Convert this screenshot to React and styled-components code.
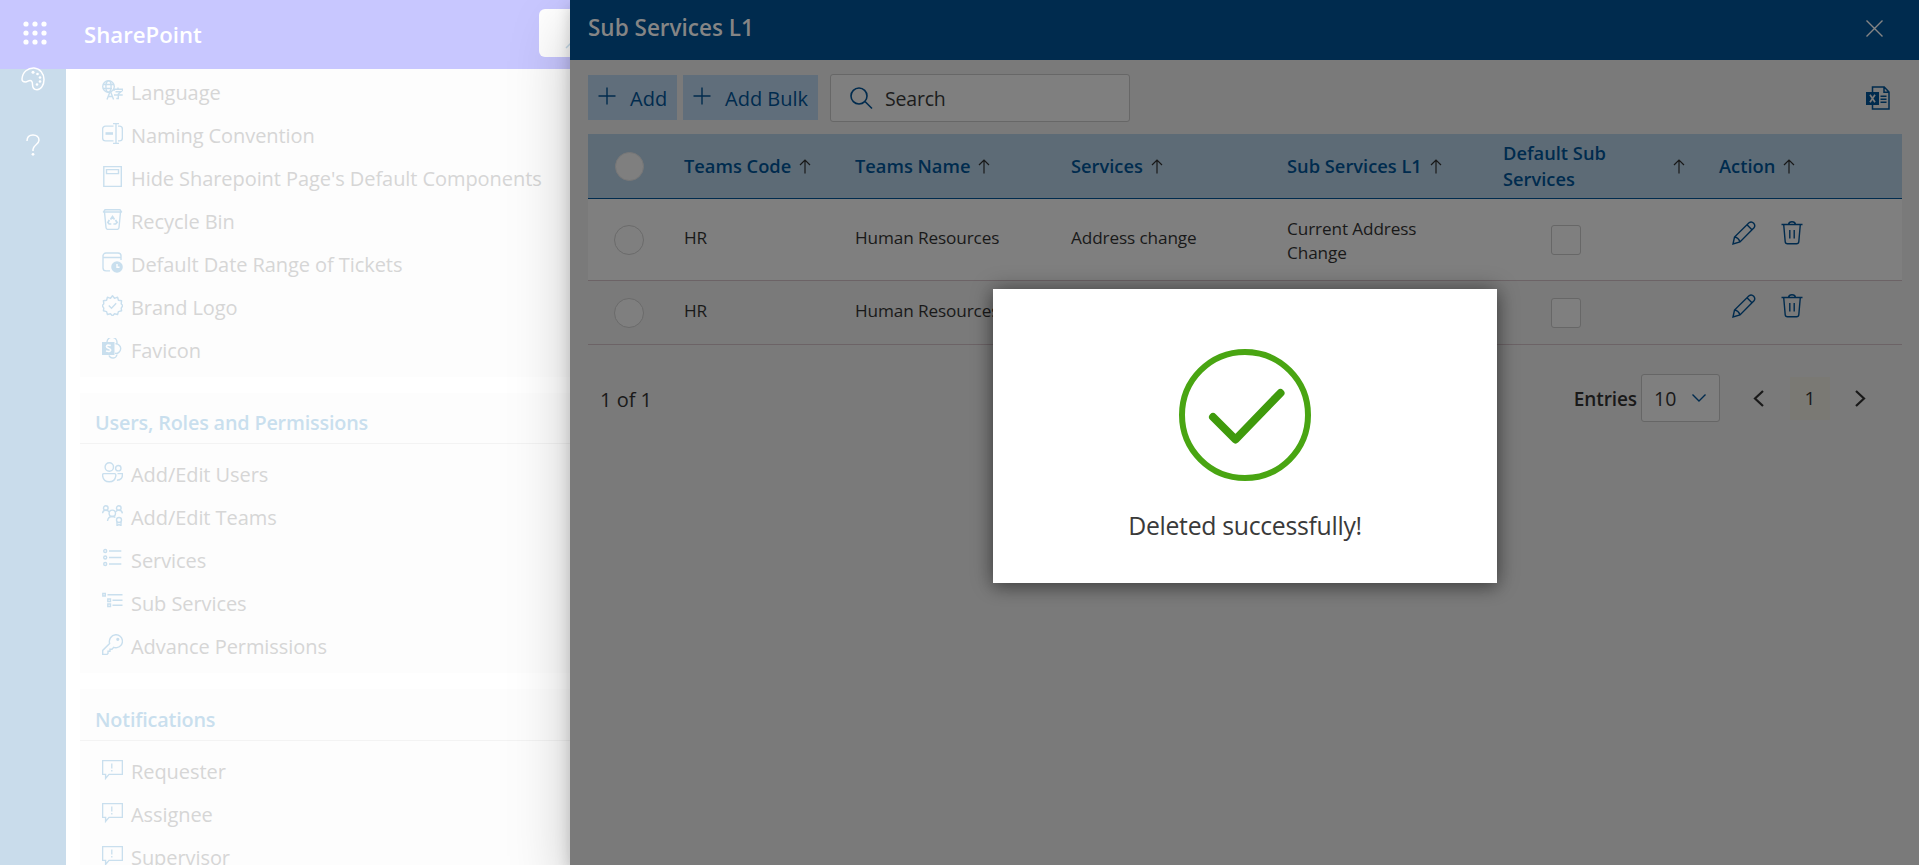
import React from 'react';
import styled, { createGlobalStyle } from 'styled-components';

const Global = createGlobalStyle`
  * { box-sizing: border-box; }
  body { margin: 0; overflow: hidden; background: #fff; font-family: "Open Sans", "Noto Sans", sans-serif; }
  svg { display: block; flex: none; }
`;

const Page = styled.div`
  position: relative;
  width: 100vw;
  height: 100vh;
  overflow: hidden;
  display: flex;
  flex-direction: column;
`;

const TopBar = styled.header`
  height: 69px;
  flex: none;
  display: flex;
  align-items: center;
  padding-left: 23px;
  background: #c8c7ff;
  color: #fff;
  > svg { margin-top: -4px; }
`;
const Brand = styled.div`
  width: 455px;
  margin-left: 37px;
  font-size: 22.2px;
  font-weight: 600;
`;
const TopSearch = styled.div`
  width: 500px;
  height: 48px;
  margin-top: -3px;
  border-radius: 6px;
  background: #fff;
  padding: 20px 0 0 26px;
`;

const Main = styled.div`
  flex: 1;
  min-height: 0;
  display: flex;
`;
const Rail = styled.nav`
  width: 66px;
  flex: none;
  display: flex;
  flex-direction: column;
  align-items: center;
  background: #c9dceb;
`;
const RailIcon = styled.div`
  margin-top: ${(p) => p.$top}px;
`;
const Settings = styled.div`
  flex: 1;
  min-width: 0;
  padding-left: 14px;
  display: flex;
  flex-direction: column;
  gap: 16px;
`;
const Panel = styled.section`
  flex: none;
  background: #fdfdfd;
  padding-top: ${(p) => p.$pt || 0}px;
  padding-bottom: ${(p) => p.$pb || 4}px;
`;
const PanelTitle = styled.h2`
  margin: 0 0 9px;
  height: ${(p) => p.$h || 51}px;
  padding: ${(p) => (p.$h ? 4 : 3)}px 0 0 15px;
  border-bottom: 1px solid #f3f3f3;
  color: #c9dfee;
  font-size: 19.8px;
  line-height: 54px;
  font-weight: 600;
  letter-spacing: -0.17px;
`;
const Item = styled.div`
  height: 43px;
  display: flex;
  align-items: center;
  gap: 8px;
  padding-left: 22px;
  color: #d6d6d6;
  font-size: 20px;
  letter-spacing: -0.07px;
  white-space: nowrap;
  svg { margin-top: -4px; }
`;

const Drawer = styled.aside`
  position: absolute;
  top: 0;
  right: 0;
  bottom: 0;
  width: 1349px;
  background: #7a7a7a;
  box-shadow: 0 25.6px 57.6px rgba(0, 0, 0, 0.22), 0 4.8px 14.4px rgba(0, 0, 0, 0.18);
`;
const DrawerHead = styled.div`
  height: 60px;
  display: flex;
  align-items: center;
  justify-content: space-between;
  padding: 0 36px 5px 18px;
  background: #002b4e;
  color: #858585;
  font-size: 22.5px;
  font-weight: 600;
  svg { margin-top: 2px; }
`;
const DrawerBody = styled.div`
  padding: 14px 17px 0 18px;
`;
const Toolbar = styled.div`
  height: 48px;
  display: flex;
  align-items: center;
`;
const Button = styled.button`
  width: ${(p) => p.$w}px;
  height: 45px;
  margin: 0 6px 1px 0;
  padding: 1px 0 0 10px;
  display: flex;
  align-items: center;
  gap: 14px;
  border: 0;
  background: #606e7b;
  color: #002b4e;
  font: 20px "Open Sans", sans-serif;
  letter-spacing: ${(p) => p.$ls || 0}px;
  white-space: nowrap;
  svg { margin-top: -4px; }
`;
const SearchBox = styled.div`
  width: 300px;
  height: 48px;
  margin-left: 6px;
  margin-right: auto;
  padding-left: 19px;
  display: flex;
  align-items: center;
  gap: 12px;
  border: 1px solid #676767;
  border-radius: 3px;
  background: #7f7f7f;
  color: #1c1c1c;
  font-size: 19.5px;
  letter-spacing: -0.2px;
`;
const ExportButton = styled.div`
  padding-right: 12px;
`;

const Row = styled.div`
  display: grid;
  grid-template-columns: 96px 171px 216px 216px 216px 216px 1fr;
`;
const HeadRow = styled(Row)`
  margin-top: 12px;
  height: 65px;
  align-items: center;
  background: #5d6b76;
  border-bottom: 1px solid #002b4e;
  color: #002b4e;
  font-size: 18.3px;
  line-height: 26px;
  font-weight: 600;
`;
const HeadCell = styled.div`
  display: flex;
  align-items: center;
  gap: 8px;
  white-space: nowrap;
`;
const HeadLabel = styled.span`
  width: ${(p) => (p.$w ? p.$w + 'px' : 'auto')};
  white-space: ${(p) => (p.$w ? 'normal' : 'nowrap')};
`;
const DataRow = styled(Row)`
  height: ${(p) => p.$h}px;
  padding-top: ${(p) => p.$pt}px;
  border-bottom: 1px solid #6c6366;
  background: ${(p) => p.$bg};
  color: #191919;
  font-size: 17.2px;
  line-height: 24px;
  letter-spacing: -0.12px;
`;
const Cell = styled.div`
  width: ${(p) => (p.$narrow ? '150px' : 'auto')};
  height: 30px;
  display: flex;
  align-items: center;
  margin-top: ${(p) => (p.$narrow ? 1 : -2)}px;
`;
const Radio = styled.span`
  width: ${(p) => p.$size || 30}px;
  height: ${(p) => p.$size || 30}px;
  margin-left: ${(p) => (p.$size ? 27 : 26)}px;
  border: 1px solid ${(p) => (p.$size ? '#777' : '#6b6b6b')};
  border-radius: 50%;
  background: #7f7f7f;
`;
const Check = styled.span`
  width: 30px;
  height: 30px;
  margin-left: 48px;
  border: 1px solid #676767;
  border-radius: 3px;
  background: #7f7f7f;
`;
const Actions = styled.div`
  display: flex;
  gap: 25px;
  padding-left: 13px;
  margin-top: -4px;
`;

const Pager = styled.div`
  margin-top: 29px;
  height: 48px;
  display: flex;
  align-items: center;
  padding: 0 36px 0 12px;
  color: #191919;
  font-size: 20px;
`;
const Count = styled.span`
  margin-right: auto;
  padding-top: 2px;
`;
const Entries = styled.span`
  font-weight: 600;
  font-size: 19px;
  letter-spacing: -0.1px;
  margin-right: 4px;
  padding-top: 2px;
`;
const Select = styled.div`
  width: 79px;
  height: 48px;
  margin-right: 33px;
  padding: 0 13px 0 12px;
  display: flex;
  align-items: center;
  justify-content: space-between;
  border: 1px solid #666;
  border-radius: 3px;
  background: #7f7f7f;
  font-size: 19.5px;
`;
const PageNumber = styled.span`
  width: 40px;
  height: 43px;
  margin: 0 25px 0 26px;
  display: flex;
  align-items: center;
  justify-content: center;
  background: #7a7974;
  font-size: 19px;
`;

const Modal = styled.div`
  position: absolute;
  left: 993px;
  top: 289px;
  width: 504px;
  height: 294px;
  padding-top: 60px;
  display: flex;
  flex-direction: column;
  align-items: center;
  background: #fff;
  color: #3a3a3a;
  font-size: 24.8px;
  letter-spacing: -0.3px;
  box-shadow: 0 6.4px 14.4px rgba(0, 0, 0, 0.2), 0 0 20px rgba(0, 0, 0, 0.4);
`;
const Message = styled.div`
  margin-top: 27px;
  line-height: 34px;
`;

const SIcon = ({ children, size = 21 }) => (
  <svg width={size} height={size} viewBox="0 0 21 21" fill="none" stroke="#c9dfee" strokeWidth="1.4">{children}</svg>
);
const bubble = (
  <SIcon><path d="M.6 1.6h19.8v13.8H7l-3.400 4v-4h-3z" /><path d="M9.800 4.500v5M9.800 11v1.500" strokeWidth="1.300" /></SIcon>
);
const icons = {
  language: <SIcon>
    <circle cx="6.500" cy="6.500" r="5.800" /><ellipse cx="6.500" cy="6.500" rx="2.600" ry="5.800" /><path d="M1 4.500h11M1 8.500h9" />
    <path d="M5 19.500l3.300-8.500 3.300 8.500M6.200 16.500h4.200" /><path d="M12 11V9.200h8.500V11M16 7.500v1.700M13.500 11.700h5.500l-2.700 2.300v4.500h-2M12 15h8.700" />
  </SIcon>,
  naming: <SIcon>
    <path d="M11.500 3.100H3.500A2.900 2.900 0 0 0 .6 6v9a2.900 2.900 0 0 0 2.900 2.900h8M16 3.100h1.500A2.900 2.900 0 0 1 20.400 6v9a2.900 2.900 0 0 1-2.900 2.900H16M14 1v19.500M11 .6h6M11 20.400h6" /><path d="M3.500 10.500h7.500" strokeWidth="2.600" />
  </SIcon>,
  hide: <SIcon><path d="M1.800.6h17.500v19.800H1.800z" /><path d="M4.500 3.600h12v4h-12z" /></SIcon>,
  recycle: <SIcon>
    <path d="M2.500 3h16l-1.500 15.500q-.2 1.900-2 1.900H6q-1.800 0-2-1.900zM1.200 3.500L3 .8h15l1.800 2.700" />
    <path d="M8.500 10.500l2-3 2 3M13.500 11l1.600 2.500-1.500 1.500h-2.200M7.300 11l-1.400 2.500 1.200 1.500h2.200" strokeWidth="1.700" />
  </SIcon>,
  date: <SIcon>
    <path d="M8 18.900H4A3 3 0 0 1 1 16V4a3 3 0 0 1 3-3h12a3 3 0 0 1 3 3v4M1 5.500h18" />
    <circle cx="15" cy="15" r="5.800" fill="#c9dfee" stroke="none" /><path d="M15 12v3.300h2.500" stroke="#fdfdfd" strokeWidth="1.400" />
  </SIcon>,
  brand: <SIcon>
    <path strokeLinejoin="round" d="M10.500.8l2 2.500 3.100-1.100.8 3 3.200.5-.4 3.200 1.600 1.800-1.600 2.400.4 2.700-3.200.8-.8 2.900-3.100-.8-2 2.300-2-2.300-3.100.8-.8-2.900-3.200-.8.4-2.700L.2 10.700l1.600-1.800-.4-3.200 3.200-.5.8-3 3.100 1.100z" />
    <path d="M6.800 10.500l2.700 2.700 4.700-5" />
  </SIcon>,
  favicon: <SIcon>
    <path d="M5 4A5 5 0 0 1 15 4.500M13.500 5.800a4.800 4.800 0 1 1-.5 9.500M15 16.500a4.200 4.200 0 0 1-8 1M15 4.500q0 1 -.500 2" />
    <path d="M0 4h12.500v13H0z" fill="#c9dfee" stroke="none" /><path d="M8.800 7.600q-4-1.300-4.300.8c0 2 4.200 1.500 4.200 3.700q-.5 2.200-4.700 1" stroke="#fdfdfd" strokeWidth="1.600" />
  </SIcon>,
  users: <SIcon>
    <circle cx="7.300" cy="5" r="4.200" /><circle cx="16.300" cy="6.200" r="2.700" /><path d="M2 11.600h10.600q1.200 0 1.200 1.200v1q-.8 6-6.600 6t-6.600-6v-1q0-1.200 1.400-1.200zM15.500 11.600h4.900q.5 6.600-5.500 6.600" />
  </SIcon>,
  teams: <SIcon>
    <circle cx="3.800" cy="3" r="2.300" /><circle cx="16.800" cy="3" r="2.300" /><circle cx="10.300" cy="8.300" r="3.200" /><circle cx="17" cy="15" r="2.500" />
    <path d="M.6 8.300q.2-3 3.200-3 2.400 0 3.200 1.500M20.400 8.300q-.4-3-3.500-3-2.400 0-3.300 1.500M5.500 16q.5-4.500 4.800-4.500 2 0 3 1M15 17v3.600l2-1 2 1V17" />
  </SIcon>,
  list: <SIcon>
    <circle cx="3.200" cy="3" r="1.500" /><circle cx="3.200" cy="9.500" r="1.500" /><circle cx="3.200" cy="16" r="1.500" /><path d="M7 3h12.300M7 9.500h12.300M7 16h12.300" />
  </SIcon>,
  sublist: <SIcon>
    <path d="M.8 2.500h2.500V5H.8zM5.800 8h2.700v2.500H5.800zM5.800 13h2.700v2.500H5.800zM5.500 3.700h15M10.500 9.200h10M10.500 14.300h10" />
  </SIcon>,
  key: <SIcon>
    <path d="M13.500.7a6.500 6.500 0 0 1 1.500 12.900q-2 .3-3.300-.3l-1.700 1.900H8v2H6v2.200l-1 1H.7v-4L7.600 9.500A7 7 0 0 1 13.500.7z" /><circle cx="15.800" cy="5.300" r=".9" fill="#c9dfee" />
  </SIcon>,
  bubble,
};

const general = [
  ['language', 'Language'], ['naming', 'Naming Convention'], ['hide', "Hide Sharepoint Page's Default Components"],
  ['recycle', 'Recycle Bin'], ['date', 'Default Date Range of Tickets'], ['brand', 'Brand Logo'], ['favicon', 'Favicon'],
];
const permissions = [
  ['users', 'Add/Edit Users'], ['teams', 'Add/Edit Teams'], ['list', 'Services'], ['sublist', 'Sub Services'], ['key', 'Advance Permissions'],
];
const notifications = [['bubble', 'Requester'], ['bubble', 'Assignee'], ['bubble', 'Supervisor']];

const Items = ({ list }) => list.map(([icon, label]) => <Item key={label}>{icons[icon]}<span>{label}</span></Item>);

const Waffle = () => (
  <svg width="24" height="24" viewBox="0 0 24 24" fill="#fff">
    {[3, 12, 21].map((y) => [3, 12, 21].map((x) => <circle key={x + '-' + y} cx={x} cy={y} r="2.600" />))}
  </svg>
);
const Palette = () => (
  <svg width="24" height="24" viewBox="0 0 24 24" fill="none" stroke="#fff" strokeWidth="1.500">
    <path d="M1 12C1.500 5 7 .8 13 1c6 .5 10 5.500 10 11.500C23 18 20 22.700 16 22.700c-3.500 0-4.500-2.500-4.500-5.200 0-2.500-.5-4-2.500-4-1.700 0-2.500 1.500-4.500 1.500C2 15 1 14 1 12z" />
    <g fill="#fff" stroke="none"><circle cx="12" cy="5.300" r="1.500" /><circle cx="16.500" cy="7" r="1.300" /><circle cx="19" cy="10.500" r="1.300" /><circle cx="19" cy="14.500" r="1.300" /><circle cx="16" cy="17.500" r="1.300" /></g>
  </svg>
);
const Question = () => (
  <svg width="14" height="22" viewBox="0 0 14 22" fill="none" stroke="#fff" strokeWidth="1.500">
    <path d="M1 7C1 3 3.500.9 7 .9S13 3 13 6.300C13 10.500 7 11 7 15.500V17" /><circle cx="7" cy="20.300" r="1.400" fill="#fff" stroke="none" />
  </svg>
);
const Line = ({ w, h, d, sw = 1.4, color = '#002b4e' }) => (
  <svg width={w} height={h} viewBox={`0 0 ${w} ${h}`} fill="none" stroke={color} strokeWidth={sw}><path d={d} /></svg>
);
const Plus = () => <Line w={18} h={18} d="M9 .5v17M.5 9h17" />;
const Up = () => <Line w={12} h={15} d="M6 14.500V1M1 6l5-5 5 5" color="#191919" sw={1.2} />;
const Pencil = () => <Line w={24} h={24} d="M1 23l1.500-7L17 1.700q2.500-1.800 4.700.5 2 2.300.3 4.500L8 21zM15 3.700l5.200 5.200M2.500 16q4 .5 5.500 5" />;
const Trash = () => <Line w={22} h={24} d="M.5 3.500h21M7.500 3.500Q8 .8 11 .8t3.500 2.700M2.700 3.500l1.500 17.300q.2 2 2.300 2h9q2.100 0 2.300-2L19.300 3.500M8.800 9v8.500M13.200 9v8.500" />;
const Excel = () => (
  <svg width="24" height="24" viewBox="0 0 24 24" fill="none" stroke="#002b4e" strokeWidth="1.500">
    <path d="M6.500 6V1h11.700L23 6v17H6.500v-4M18 1v5.300h5M14.500 10.200h6M14.500 13.200h6M14.500 16.200h6" />
    <path d="M0 6h13v13H0z" fill="#002b4e" stroke="none" /><path d="M4 8.800l5 7.500M9 8.800l-5 7.500" stroke="#7a7a7a" strokeWidth="1.700" />
  </svg>
);
const Success = () => (
  <svg width="132" height="132" viewBox="0 0 132 132" fill="none">
    <circle cx="66" cy="66" r="63" stroke="#49a512" strokeWidth="6" />
    <path d="M34 68l22.500 22.500L101.500 44" stroke="#3f9a0c" strokeWidth="8" strokeLinecap="round" strokeLinejoin="round" />
  </svg>
);

const columns = [['Teams Code'], ['Teams Name'], ['Services'], ['Sub Services L1'], ['Default Sub Services', 162], ['Action']];
const rows = [
  { h: 82, pt: 26, bg: '#7f7f7f', service: 'Address change', sub: 'Current Address Change' },
  { h: 64, pt: 17, bg: '#7a7a7a', service: 'Address change', sub: 'New Address' },
];

export default function App() {
  return (
    <Page>
      <Global />
      <TopBar>
        <Waffle />
        <Brand>SharePoint</Brand>
        <TopSearch><Line w={24} h={24} d="M1 19L9 11" color="#c9dfee" /></TopSearch>
      </TopBar>
      <Main>
        <Rail>
          <RailIcon $top={-2}><Palette /></RailIcon>
          <RailIcon $top={43}><Question /></RailIcon>
        </Rail>
        <Settings>
          <Panel $pt={2} $pb={5}><Items list={general} /></Panel>
          <Panel $pb={5}><PanelTitle>Users, Roles and Permissions</PanelTitle><Items list={permissions} /></Panel>
          <Panel><PanelTitle $h={52}>Notifications</PanelTitle><Items list={notifications} /></Panel>
        </Settings>
      </Main>
      <Drawer>
        <DrawerHead>
          <span>Sub Services L1</span>
          <Line w={17} h={17} d="M.5 .5l16 16M16.500 .5l-16 16" color="#858585" />
        </DrawerHead>
        <DrawerBody>
          <Toolbar>
            <Button $w={89}><Plus />Add</Button>
            <Button $w={135}><Plus />Add Bulk</Button>
            <SearchBox><Line w={23} h={23} d="M9 1a8 8 0 1 1 0 16a8 8 0 1 1 0-16M15 14.500l7 7" sw={1.6} />Search</SearchBox>
            <ExportButton><Excel /></ExportButton>
          </Toolbar>
          <HeadRow>
            <Radio $size={29} />
            {columns.map(([label, w]) => <HeadCell key={label}><HeadLabel $w={w}>{label}</HeadLabel><Up /></HeadCell>)}
          </HeadRow>
          {rows.map((r) => (
            <DataRow key={r.sub} $h={r.h} $pt={r.pt} $bg={r.bg}>
              <Radio />
              <Cell>HR</Cell>
              <Cell>Human Resources</Cell>
              <Cell>{r.service}</Cell>
              <Cell $narrow>{r.sub}</Cell>
              <Check />
              <Actions><Pencil /><Trash /></Actions>
            </DataRow>
          ))}
          <Pager>
            <Count>1 of 1</Count>
            <Entries>Entries</Entries>
            <Select>10<Line w={14} h={8} d="M.5 .5L7 7l6.500-6.500" /></Select>
            <Line w={11} h={17} d="M10 1L2 8.500L10 16" sw={2.2} color="#191919" />
            <PageNumber>1</PageNumber>
            <Line w={11} h={17} d="M1 1l8 7.500L1 16" sw={2.2} color="#191919" />
          </Pager>
        </DrawerBody>
      </Drawer>
      <Modal>
        <Success />
        <Message>Deleted successfully!</Message>
      </Modal>
    </Page>
  );
}
